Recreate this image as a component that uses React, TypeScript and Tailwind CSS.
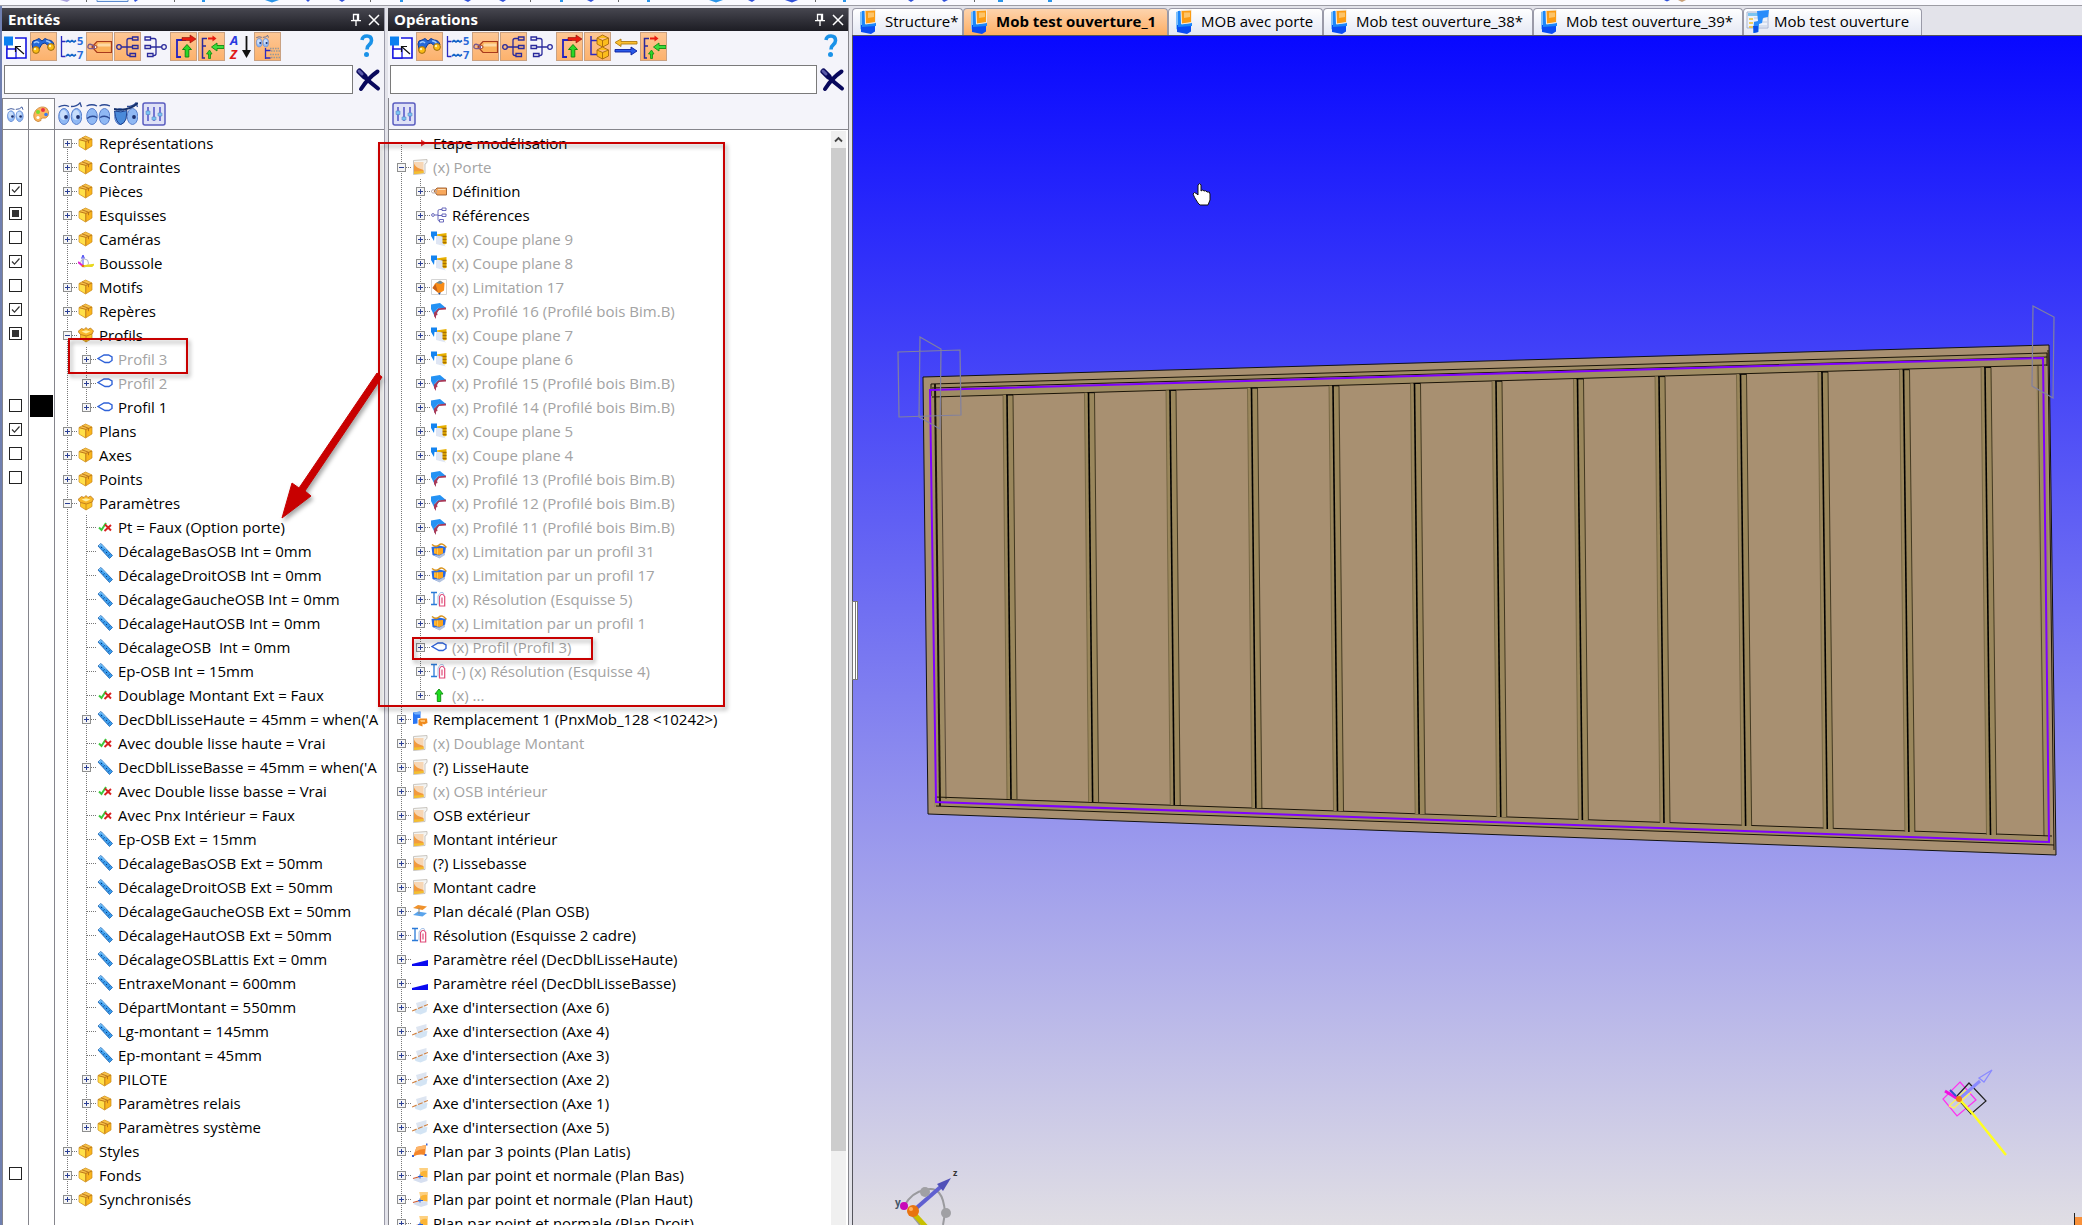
import { ReactNode } from 'react';
import clsx from 'clsx';

type IconName =
  | 'box'
  | 'openBox'
  | 'compass'
  | 'profile'
  | 'bool'
  | 'ruler'
  | 'step'
  | 'page'
  | 'tag'
  | 'refs'
  | 'cut'
  | 'limit'
  | 'beam'
  | 'limitProfile'
  | 'solve'
  | 'up'
  | 'replace'
  | 'offsetPlane'
  | 'real'
  | 'axis'
  | 'plane3'
  | 'planeNormal';

interface TreeItem {
  label: string;
  icon: IconName;
  level?: number;
  expander?: 'plus' | 'minus';
  muted?: boolean;
  check?: 'on' | 'off' | 'mixed';
  swatch?: boolean;
}

const folder = (label: string, check?: TreeItem['check'], level = 0): TreeItem => ({
  label,
  icon: 'box',
  expander: 'plus',
  check,
  level,
});
const param = (label: string, expander?: 'plus'): TreeItem => ({
  label,
  icon: 'ruler',
  level: 1,
  expander,
});
const bool = (label: string): TreeItem => ({ label, icon: 'bool', level: 1 });
const op = (label: string, icon: IconName, level = 0): TreeItem => ({
  label,
  icon,
  level,
  expander: 'plus',
  muted: /^(\(-\) )?\(x\)/.test(label),
});

const ENTITIES: TreeItem[] = [
  folder('Représentations'),
  folder('Contraintes'),
  folder('Pièces', 'on'),
  folder('Esquisses', 'mixed'),
  folder('Caméras', 'off'),
  { label: 'Boussole', icon: 'compass', check: 'on' },
  folder('Motifs', 'off'),
  folder('Repères', 'on'),
  { label: 'Profils', icon: 'openBox', expander: 'minus', check: 'mixed' },
  { label: 'Profil 3', icon: 'profile', level: 1, expander: 'plus', muted: true },
  { label: 'Profil 2', icon: 'profile', level: 1, expander: 'plus', muted: true },
  { label: 'Profil 1', icon: 'profile', level: 1, expander: 'plus', check: 'off', swatch: true },
  folder('Plans', 'on'),
  folder('Axes', 'off'),
  folder('Points', 'off'),
  { label: 'Paramètres', icon: 'openBox', expander: 'minus' },
  bool('Pt = Faux (Option porte)'),
  param('DécalageBasOSB Int = 0mm'),
  param('DécalageDroitOSB Int = 0mm'),
  param('DécalageGaucheOSB Int = 0mm'),
  param('DécalageHautOSB Int = 0mm'),
  param('DécalageOSB  Int = 0mm'),
  param('Ep-OSB Int = 15mm'),
  bool('Doublage Montant Ext = Faux'),
  param("DecDblLisseHaute = 45mm = when('A", 'plus'),
  bool('Avec double lisse haute = Vrai'),
  param("DecDblLisseBasse = 45mm = when('A", 'plus'),
  bool('Avec Double lisse basse = Vrai'),
  bool('Avec Pnx Intérieur = Faux'),
  param('Ep-OSB Ext = 15mm'),
  param('DécalageBasOSB Ext = 50mm'),
  param('DécalageDroitOSB Ext = 50mm'),
  param('DécalageGaucheOSB Ext = 50mm'),
  param('DécalageHautOSB Ext = 50mm'),
  param('DécalageOSBLattis Ext = 0mm'),
  param('EntraxeMonant = 600mm'),
  param('DépartMontant = 550mm'),
  param('Lg-montant = 145mm'),
  param('Ep-montant = 45mm'),
  folder('PILOTE', undefined, 1),
  folder('Paramètres relais', undefined, 1),
  folder('Paramètres système', undefined, 1),
  folder('Styles'),
  folder('Fonds', 'off'),
  folder('Synchronisés'),
];

const OPERATIONS: TreeItem[] = [
  { label: 'Etape modélisation', icon: 'step' },
  { label: '(x) Porte', icon: 'page', expander: 'minus', muted: true },
  op('Définition', 'tag', 1),
  op('Références', 'refs', 1),
  op('(x) Coupe plane 9', 'cut', 1),
  op('(x) Coupe plane 8', 'cut', 1),
  op('(x) Limitation 17', 'limit', 1),
  op('(x) Profilé 16 (Profilé bois Bim.B)', 'beam', 1),
  op('(x) Coupe plane 7', 'cut', 1),
  op('(x) Coupe plane 6', 'cut', 1),
  op('(x) Profilé 15 (Profilé bois Bim.B)', 'beam', 1),
  op('(x) Profilé 14 (Profilé bois Bim.B)', 'beam', 1),
  op('(x) Coupe plane 5', 'cut', 1),
  op('(x) Coupe plane 4', 'cut', 1),
  op('(x) Profilé 13 (Profilé bois Bim.B)', 'beam', 1),
  op('(x) Profilé 12 (Profilé bois Bim.B)', 'beam', 1),
  op('(x) Profilé 11 (Profilé bois Bim.B)', 'beam', 1),
  op('(x) Limitation par un profil 31', 'limitProfile', 1),
  op('(x) Limitation par un profil 17', 'limitProfile', 1),
  op('(x) Résolution (Esquisse 5)', 'solve', 1),
  op('(x) Limitation par un profil 1', 'limitProfile', 1),
  op('(x) Profil (Profil 3)', 'profile', 1),
  op('(-) (x) Résolution (Esquisse 4)', 'solve', 1),
  op('(x) ...', 'up', 1),
  op('Remplacement 1 (PnxMob_128 <10242>)', 'replace'),
  op('(x) Doublage Montant', 'page'),
  op('(?) LisseHaute', 'page'),
  op('(x) OSB intérieur', 'page'),
  op('OSB extérieur', 'page'),
  op('Montant intérieur', 'page'),
  op('(?) Lissebasse', 'page'),
  op('Montant cadre', 'page'),
  op('Plan décalé (Plan OSB)', 'offsetPlane'),
  op('Résolution (Esquisse 2 cadre)', 'solve'),
  op('Paramètre réel (DecDblLisseHaute)', 'real'),
  op('Paramètre réel (DecDblLisseBasse)', 'real'),
  op("Axe d'intersection (Axe 6)", 'axis'),
  op("Axe d'intersection (Axe 4)", 'axis'),
  op("Axe d'intersection (Axe 3)", 'axis'),
  op("Axe d'intersection (Axe 2)", 'axis'),
  op("Axe d'intersection (Axe 1)", 'axis'),
  op("Axe d'intersection (Axe 5)", 'axis'),
  op('Plan par 3 points (Plan Latis)', 'plane3'),
  op('Plan par point et normale (Plan Bas)', 'planeNormal'),
  op('Plan par point et normale (Plan Haut)', 'planeNormal'),
  op('Plan par point et normale (Plan Droit)', 'planeNormal'),
];

const TREE_ICONS: Record<IconName, ReactNode> = {
  box: (
    <>
      <path d="M1 4.500 7.500 1 14 4v7l-6.500 4L1 11z" fill="#f9b41c" stroke="#c98a1a" strokeWidth=".7" />
      <path d="M1.500 4.500 7.500 1.500 13.500 4 8 6z" fill="#f6c04a" />
      <path d="M1.500 5 7.500 6.500V14.300L1.500 11z" fill="#ffe04a" />
      <path d="M7.800 6.500V14.500M1.300 4.700 7.800 6.400 13.800 4.200M4 2.800 10.500 5.200v3" stroke="#b5701a" strokeWidth=".9" fill="none" />
    </>
  ),
  openBox: (
    <>
      <path d="M2.500 6 8 4l6 2v5.500L8 15l-5.500-3.500z" fill="#fbc52a" stroke="#c98a1a" strokeWidth=".7" />
      <path d="M0 4.500 3.500 1.500 6 2.500 8 .5l2 2 2.500-1.500 3 3-1.500 3-5.500 2-6-1.500z" fill="#f8b82a" stroke="#b9751a" strokeWidth=".8" />
      <path d="M3.500 4.500 8 3.300 12.500 4.500 8 6.500z" fill="#fff0a0" />
      <path d="M8 8.500V15" stroke="#d08e1a" />
    </>
  ),
  compass: (
    <>
      <path d="M5 11V1M3.500 3.500 5 0l1.500 3.500" stroke="#4a4af0" fill="none" />
      <circle cx="6.500" cy="8" r="4" fill="none" stroke="#b8b8c4" />
      <path d="m0 7 5 4" stroke="#e020d0" strokeWidth="2" />
      <path d="m5 11 11-1.500-2 1.800z" stroke="#e8d820" fill="#e8d820" strokeWidth="1.300" />
      <circle cx="5" cy="11" r="1.300" fill="#f07010" />
    </>
  ),
  profile: <path d="m1 7.500 6-3.500h4.500l3.500 2v3.500l-3 2H8z" fill="#fff" stroke="#2f62d8" strokeWidth="1.400" />,
  bool: (
    <>
      <path d="M2 8.500 4.500 11 9 4" stroke="#3cc83c" strokeWidth="2" fill="none" />
      <path d="m8 5.500 6 6M14 6l-6.500 6" stroke="#d82020" strokeWidth="1.900" />
    </>
  ),
  ruler: (
    <>
      <path d="M1 3 4 .5 15.500 12.500 12.500 15.500z" fill="#3a9cec" stroke="#1a62b0" strokeWidth=".8" />
      <path d="M2 3 4 1.500 9 6.500" stroke="#9ad6ff" fill="none" />
      <path d="M4 5l1-1M6.500 7.500 7.500 6.500M9 10l1-1M11.500 12.500l1-1" stroke="#0a3c80" />
    </>
  ),
  step: <path d="M1 7h8V4.500L14.500 8 9 11.500V9H1z" fill="#e03c3c" />,
  page: (
    <>
      <path d="M1.500 1.500 15 .5V3.500l-2 1.500V14.500l-11.500 1z" fill="#f4f4f2" stroke="#bdb8b0" strokeWidth=".8" />
      <path d="M2 3h9.500v11L2 15z" fill="#f7d6b4" />
      <path d="M2 4.500C4 9 8 9.500 11.500 11v3L2 15z" fill="#f29a3c" />
      <path d="M2 12.500 11.500 12v2L2 15z" fill="#f2c030" />
    </>
  ),
  tag: (
    <>
      <path d="M3 8 6 5h9.500v7H6z" fill="#f8a85c" stroke="#9a5a2a" strokeWidth=".9" />
      <path d="M7 6.500h7.500" stroke="#ffdcb0" />
      <path d="M6 8C3 6 .5 6.500.5 8.500S4 10.500 6 8.500" stroke="#b0a0a0" fill="none" />
    </>
  ),
  refs: (
    <g fill="#fff" stroke="#5a5ab4" strokeWidth=".9">
      <path d="M3.500 8H7M11 2.500H8.500Q7 2.500 7 4v8.500q0 1.500 1.500 1.500M7 8.500h4" fill="none" />
      <circle cx="2" cy="8" r="1.400" />
      <path d="M11 1h4v2.500h-4zM11 7h4v2.500h-4zM8.500 12.500h4V15h-4z" />
    </g>
  ),
  cut: (
    <>
      <path d="M5 3.500 15.500 2V13L9 14z" fill="#e8b000" />
      <path d="M10 5.500h5.500M10 8.500h5.500M11 11.500h4.500" stroke="#a87000" strokeWidth="1.300" />
      <path d="M5 4.500 11.500 5.500V12L15 15.500 5 13z" fill="#dfe6f4" />
      <path d="M0 .5h6V5L3.500 5 3 10 0 5z" fill="#1484f0" />
    </>
  ),
  limit: (
    <>
      <path d="M.5.5h15v15H.5z" fill="#fff" stroke="#d4d4d4" />
      <path d="M4 4.500 9 2 13.500 4 13 11.500 8 14.500 1.500 9z" fill="#f88c18" />
      <path d="M5 4 9 1.500l3 2-2 1.500z" fill="#6a8a9a" />
      <path d="m1.500 9 3-4L7 13.500z" fill="#c86018" />
      <path d="m7 14 1.500 1.800L10 13.500z" fill="#204a9a" />
    </>
  ),
  beam: (
    <>
      <path d="M0 1.500 9 0l6 5-3 1-3.500-.5-3 5.500L4 14 0 6z" fill="#2492f4" />
      <path d="M15 4.500V6.500L8 7 6 9.500 6.500 12 5 12.500V16L3 13V9L7 5.500z" fill="#a83a58" />
      <path d="M3 9.500 7.500 4.500" stroke="#4ab0ff" />
    </>
  ),
  limitProfile: (
    <>
      <path d="M.5 4 8 2.500 15 4 14 10 8.500 15 1.500 12z" fill="#2a6ae0" />
      <path d="M3 5.500 12 5V10.500L8.500 12 3 10.500z" fill="#fca41c" />
      <path d="M4 5.500V10M6.500 5.500V11.500" stroke="#ffc850" />
      <path d="M2.500 12 8.500 12.500 14 9.500V12L8.500 15.500z" fill="#b4c4e0" />
      <path d="M1 1.500Q5 5 8 2t7.500 2.500" stroke="#d8921a" strokeWidth="1.500" fill="none" />
    </>
  ),
  solve: (
    <>
      <path d="M0 1.500h6M0 13.500h6M3 1.500v12" stroke="#2a7ad8" strokeWidth="1.300" />
      <path d="M7 13.500V5L9.500 1.500H12L13 4" fill="none" stroke="#a8c4e8" />
      <path d="M8.500 15V5.500Q11 1 13.700 5.500V15zM11 6.500v6" fill="#fff" stroke="#e04a78" strokeWidth="1.200" />
    </>
  ),
  up: <path d="M8 2 12 7H9.700v7.500H6.300V7H4z" fill="#1ede1e" stroke="#149414" />,
  replace: (
    <>
      <path d="M1 1.500 8.500.5V7L5.500 7v5.500L1 13z" fill="#2a76f4" />
      <path d="M1 1.500 8.500.5V3.500H3z" fill="#7ab4ff" />
      <path d="M6.500 9 8 7.500H15L15.500 12 12 13.500 10.500 12.500V15.500L6.500 14z" fill="#f08a1c" />
      <path d="M8 9h5v2H9z" fill="#fcc070" />
    </>
  ),
  offsetPlane: (
    <>
      <path d="m1 5 5-3 9 1.500-4.500 3.500z" fill="#f0922c" />
      <path d="m1 12 5-3.500 9 1.500-4.500 3.500z" fill="#5aa4ec" />
      <path d="M7 5v6" stroke="#888" />
    </>
  ),
  real: <path d="M0 13 16 9V15H0z" fill="#0a0af0" />,
  axis: (
    <>
      <path d="m4 4 10.500-3v6.500l-9 2z" fill="#dde5f1" />
      <path d="m2.500 11.500 6-3 7-.5-1 5-6 2.500-5-1.500z" fill="#d3e4f4" />
      <path d="M0 12 16 5.500" stroke="#d08040" strokeWidth="1.100" strokeDasharray="5 1.500" />
    </>
  ),
  plane3: (
    <>
      <path d="m4.500 4 9.500-2L13 12q-6-1.500-12 1.500z" fill="#f4862a" />
      <path d="m4.500 4 9.500-2-.5 4Q8 5.500 3 9z" fill="#fdb468" />
      <path d="M14 .5h1.500v2H14zM0 12h2v2H0zM12.500 11h2v2h-2z" fill="#3a62d0" />
    </>
  ),
  planeNormal: (
    <>
      <path d="m1 13 5-3 9.500.5V14L9 16z" fill="#d6dff0" />
      <path d="M7.500 1h8v9.500l-7-1z" fill="#fbb436" />
      <path d="M8 1h7.500V4Q11 3 8 6z" fill="#fdd080" />
      <path d="m1 11.500 7-2" stroke="#d05a30" strokeWidth="1.300" />
      <path d="M8 7.500v4M6 9.500h5" stroke="#2a62d8" />
    </>
  ),
};

const Connector = ({ item, top, bottom }: { item: TreeItem; top: boolean; bottom: boolean }) => (
  <svg width="15" height="24" className="shrink-0" aria-hidden>
    <g stroke="#777" strokeDasharray="1 1" shapeRendering="crispEdges">
      {top && <path d="M4.500 0V12" />}
      {bottom && <path d="M4.500 12V24" />}
      {item.icon !== 'step' && <path d="M5 12.500H15" />}
    </g>
    {item.expander && (
      <>
        <rect x=".5" y="8.500" width="8" height="8" fill="#f6f6f6" stroke="#8e8f8f" />
        <path d="M2 12.500H7" stroke="#2b3f94" />
        {item.expander === 'plus' && <path d="M4.500 10V15" stroke="#2b3f94" />}
      </>
    )}
  </svg>
);

const Tree = ({ items, label }: { items: TreeItem[]; label: string }) => (
  <ul aria-label={label} className="min-w-0 flex-1 overflow-hidden pl-2 pt-px">
    {items.map((item, i) => {
      const level = item.level ?? 0;
      const rest = items.slice(i + 1);
      const stop = rest.findIndex((next) => (next.level ?? 0) < level);
      const siblings = stop < 0 ? rest : rest.slice(0, stop);
      return (
        <li key={i} className="flex h-6 items-center">
          {level > 0 && (
            <svg width="19" height="24" className="shrink-0" aria-hidden>
              <path d="M4.500 0V24" stroke="#777" strokeDasharray="1 1" shapeRendering="crispEdges" />
            </svg>
          )}
          <Connector
            item={item}
            top={i > 0}
            bottom={siblings.some((next) => (next.level ?? 0) === level)}
          />
          <svg width="16" height="16" className="shrink-0" aria-hidden>
            {TREE_ICONS[item.icon]}
          </svg>
          <span className={clsx('ml-[5px] whitespace-pre', item.muted && 'text-[#a3a3a3]')}>
            {item.label}
          </span>
        </li>
      );
    })}
  </ul>
);

const Eyes = ({ mode = 'open' }: { mode?: 'open' | 'closed' | 'patch' }) => (
  <>
    <g stroke="#5a80cc">
      <ellipse cx="6" cy="14.500" rx="5.300" ry="8" fill="#8fb8f4" />
      <ellipse cx="18.500" cy="14.500" rx="5.300" ry="8" fill="#8fb8f4" />
    </g>
    {mode === 'open' && (
      <g fill="#c8defc">
        <ellipse cx="5.500" cy="13" rx="3.500" ry="5" />
        <ellipse cx="18" cy="13" rx="3.500" ry="5" />
      </g>
    )}
    {mode !== 'closed' && (
      <>
        <circle cx="20" cy="15" r="1.900" fill="#1c2f6c" />
        <path d="M13 4.500Q19 4.500 22 .8L23.500 5" stroke="#2c4a94" strokeWidth="1.300" fill="none" />
      </>
    )}
    {mode === 'open' && (
      <>
        <circle cx="8" cy="15" r="1.900" fill="#1c2f6c" />
        <path d="M.5 5Q6 2 11 4.500" stroke="#2c4a94" strokeWidth="1.300" fill="none" />
      </>
    )}
    {mode === 'closed' && (
      <path d="M.5 4Q6 1.500 11 4M13.500 4Q18 1.500 24 4M1 16.500Q6 12.500 11 15.500M14 15.500Q19 12.500 24 16.500" stroke="#2c4a94" strokeWidth="1.300" fill="none" />
    )}
    {mode === 'patch' && (
      <>
        <path d="M.5 9Q7 11 13 8.500L12 17Q10 22 6.500 22.500 2 21 .5 9z" fill="#4a8ada" stroke="#1c3f8c" />
        <path d="M0 7Q14 10 24 1" stroke="#14306c" strokeWidth="1.800" fill="none" />
      </>
    )}
  </>
);

const Sliders = () => (
  <>
    <rect x="1" y="1" width="22" height="22" rx="2" fill="#dfe1f6" stroke="#5a5cc0" strokeWidth="1.500" />
    <path d="M6 5v14M12 5v14M18 5v14" stroke="#3a3cc0" strokeWidth="1.300" />
    <path d="M4 9h4v3.500H4zM10 15h4v3h-4zM16 11h4v3h-4z" fill="#7cc4f4" stroke="#5a8ac8" strokeWidth=".6" />
  </>
);

const TreeNodes = () => (
  <g fill="none" stroke="#2a2a9c" strokeWidth="1.300">
    <circle cx="5" cy="15" r="2.300" />
    <path d="M7.300 15H18M13 15V8.500q0-2 2-2h3M13 15v6.500q0 2 2 2h1" />
    <path d="M18.500 5h5.500v3h-5.500zM18.500 13.500h5.500v3h-5.500zM16 21.500h5.500v3H16z" />
  </g>
);

const BAR_ICONS: Record<string, { title: string; active?: boolean; art: ReactNode }> = {
  window: {
    title: 'Sélection',
    art: (
      <>
        <path d="M5 8.500V26h19V6H13" fill="#fff" stroke="#1414e0" strokeWidth="1.600" />
        <path d="M5 17H14V26H5z" fill="#fff" stroke="#1414e0" strokeWidth="1.300" />
        <path d="M2 4.500h9v9H2z" fill="#0a80f0" />
        <path d="M22 22l-8-7M13.500 20V14.500H19" stroke="#111" strokeWidth="1.200" fill="none" />
      </>
    ),
  },
  search: {
    title: 'Rechercher',
    active: true,
    art: (
      <>
        <path d="M2 12Q2 8 6 8L9 6.500 12 9 15 6.500 18 8Q23 8 24 13L20 15 15 11 12 12 9 17 3 17z" fill="#2468d8" stroke="#123c94" />
        <path d="M4 11q3-2.500 5 0M16 9q3-.5 5 3" stroke="#9ccaff" strokeWidth="1.500" fill="none" />
        <circle cx="6" cy="18" r="3.400" fill="#fbbc14" stroke="#9a6a10" />
        <circle cx="21" cy="15" r="3.400" fill="#fbbc14" stroke="#9a6a10" />
        <circle cx="5" cy="17" r="1.200" fill="#fff4b0" />
        <circle cx="20" cy="14" r="1.200" fill="#fff4b0" />
      </>
    ),
  },
  numbering: {
    title: 'Numérotation',
    art: (
      <>
        <path d="M3.500 4v21M3.500 9.500h4M3.500 24.500h4" stroke="#2a2ac0" strokeWidth="1.300" fill="none" />
        <path d="M8 10l2-1.500L12 10l2-1.500 2 1.500 2-1.500M8 24l2-1.500L12 24l2-1.500 2 1.500 2-1.500" stroke="#1464c8" strokeWidth="1.600" fill="none" />
        <text x="19" y="13" fontSize="11" fontWeight="700" fill="#2a6ad8">5</text>
        <text x="19" y="27" fontSize="11" fontWeight="700" fill="#2a6ad8">7</text>
      </>
    ),
  },
  label: {
    title: 'Définition',
    active: true,
    art: (
      <>
        <path d="M6 15 11 9.500H25.500V20.500H11z" fill="#fbb05a" stroke="#a83a1c" strokeWidth="1.200" />
        <path d="M12 11.500h12.500v3H11z" fill="#fdd8a4" />
        <circle cx="9.500" cy="15" r="1.500" fill="#fff" stroke="#a83a1c" />
        <path d="M9 15Q3 10 2 14t7 2" stroke="#7a5a8c" strokeWidth="1.300" fill="none" />
      </>
    ),
  },
  nodes: { title: 'Références', active: true, art: <TreeNodes /> },
  nodesBack: {
    title: 'Dépendances',
    art: (
      <g transform="matrix(-1 0 0 1 27 0)">
        <TreeNodes />
      </g>
    ),
  },
  insert: {
    title: 'Insérer',
    active: true,
    art: (
      <>
        <path d="M16 8H7V25H11" stroke="#2222c0" strokeWidth="1.800" fill="none" />
        <path d="M12 5.500h8V3l6 4-6 4V8.500h-8z" fill="#e81c10" stroke="#8c1208" strokeWidth=".6" />
        <path d="M17 12.500l4.500 5h-2.700V25h-3.600v-7.500h-2.700z" fill="#28d828" stroke="#118a11" />
      </>
    ),
  },
  move: {
    title: 'Déplacer',
    active: true,
    art: (
      <>
        <path d="M9 6.500H4.500V26H7M4.500 14H8" stroke="#2a2a9c" strokeWidth="1.500" fill="none" />
        <path d="M10 5.500h4.500V3.500l4 3-4 3V7.500H10z" fill="#e81c10" />
        <path d="M26 13.500v3h-7V19l-5.500-4L19 11v2.500z" fill="#3cdc3c" stroke="#128a12" strokeWidth=".9" />
        <path d="M11.500 18 14 22H12.500v4.500h-2V22H8.500z" fill="#28d828" stroke="#118a11" strokeWidth=".8" />
      </>
    ),
  },
  sort: {
    title: 'Trier',
    art: (
      <>
        <text x="4" y="13" fontSize="13" fontStyle="italic" fontWeight="700" fill="#2a3ae0">A</text>
        <text x="4" y="27" fontSize="13" fontStyle="italic" fontWeight="700" fill="#e01818">Z</text>
        <path d="M20.500 4v16" stroke="#111" strokeWidth="1.800" />
        <path d="M16 18h9l-4.500 8z" fill="#111" />
      </>
    ),
  },
  visible: {
    title: 'Visibilité',
    active: true,
    art: (
      <>
        <g transform="translate(2 3) scale(.53)">
          <Eyes />
        </g>
        <path d="M11.500 16v11M11.500 18.500h5M11.500 26h5" stroke="#2a2ac0" strokeWidth="1.300" />
        <path d="M16 16.500h10M17 19h9M16 22.500h10M17 25.500h9" stroke="#999" strokeWidth="1.500" strokeDasharray="1.500 1" />
      </>
    ),
  },
  cubes: {
    title: 'Composants',
    active: true,
    art: (
      <>
        <path d="M7 4v18.500h6M7 8.500h6" stroke="#2a2ac0" strokeWidth="1.500" fill="none" />
        <g fill="#fcbc1c" stroke="#a86a0c" strokeWidth=".9">
          <path d="m13 6 5.500-3L24.500 6v6l-6 3L13 12zM13 6l5.500 2.500L24.500 6M18.500 8.500V15" />
          <path d="m13 18 5.500-3 6 3v6l-6 3-5.500-3zM13 18l5.500 2.500 6-2.500M18.500 20.500V27" />
        </g>
      </>
    ),
  },
  swap: {
    title: 'Inverser',
    art: (
      <>
        <path d="M25 9.500V12H9v2.500L3 10.500 9 7V9.500z" fill="#fbc030" stroke="#b07a10" strokeWidth=".9" />
        <path d="M3 17.500V20h16V23l6-4-6-4V17.500z" fill="#2a5ae8" stroke="#0a1e9c" strokeWidth=".9" />
      </>
    ),
  },
};

const ENTITY_BAR = ['window', 'search', 'numbering', 'label', 'nodes', 'nodesBack', 'insert', 'move', 'sort', 'visible'];
const OPERATION_BAR = ['window', 'search', 'numbering', 'label', 'nodes', 'nodesBack', 'insert', 'cubes', 'swap', 'move'];

const PanelHead = ({ title, tools, id }: { title: string; tools: string[]; id: string }) => (
  <>
    <header className="flex h-[23px] items-center bg-linear-to-b from-[#474750] to-[#1d1d24] pl-1.5 pr-1 text-white">
      <h2 className="flex-1 pb-0.5 font-bold">{title}</h2>
      <button aria-label="Épingler" className="mr-1.5">
        <svg width="12" height="16" stroke="#fff" fill="none" strokeWidth="1.300">
          <path d="M3.500 2.500h5v6h-5zM1 8.700h10M6 9v5M7.500 2.500v6" />
        </svg>
      </button>
      <button aria-label="Fermer">
        <svg width="12" height="12" stroke="#fff" strokeWidth="1.500">
          <path d="m1 1 10 10M11 1 1 11" />
        </svg>
      </button>
    </header>
    <div className="flex h-[34px] items-start gap-px pt-px">
      {tools.map((name) => (
        <button
          key={name}
          title={BAR_ICONS[name].title}
          className={clsx(
            'h-[29px] w-[27px]',
            BAR_ICONS[name].active &&
              'bg-linear-to-b from-[#fdc795] to-[#fcb16b] outline outline-[#c9a182] -outline-offset-1'
          )}
        >
          <svg width="27" height="29" aria-hidden>
            {BAR_ICONS[name].art}
          </svg>
        </button>
      ))}
      <button aria-label="Aide" className="ml-auto mr-2.5 mt-0.5">
        <svg width="14" height="24">
          <path d="M2 6Q2.500 2 7 2t4.500 4.500Q11.500 9 9 11 7 12.500 7 15.500" stroke="#1a92e8" strokeWidth="3.600" fill="none" />
          <circle cx="6.500" cy="20.500" r="2.500" fill="#1a92e8" />
        </svg>
      </button>
    </div>
    <div className="flex h-[33px] items-start pl-0.5">
      <input
        id={id}
        aria-label={`Filtrer ${title}`}
        className="h-[29px] min-w-0 flex-1 border border-[#7a7a7a] bg-white px-1 outline-none"
      />
      <button aria-label="Effacer le filtre" className="ml-0.5 mr-[3px] mt-0.5">
        <svg width="26" height="26" strokeLinecap="round">
          <path d="M22.500 4.500Q13 11 6 22" stroke="#08085c" strokeWidth="4" fill="none" />
          <path d="M4.500 4.500 15 15 23 21.500" stroke="#08085c" strokeWidth="4" fill="none" />
          <path d="M4.500 4.500l5 5" stroke="#08085c" strokeWidth="6" />
          <path d="M4 4l3 3" stroke="#5a5aa8" strokeWidth="3" />
        </svg>
      </button>
    </div>
  </>
);

const CheckCell = ({ item }: { item: TreeItem }) => (
  <div className="flex h-6 justify-center pt-[5px]">
    {item.check && (
      <label className="relative h-[13px] w-[13px]">
        <input
          type="checkbox"
          aria-label={item.label}
          defaultChecked={item.check === 'on'}
          className="block h-[13px] w-[13px] appearance-none border border-[#222] bg-white"
        />
        <svg width="13" height="13" className="absolute inset-0" aria-hidden>
          {item.check === 'on' && (
            <path d="m3 6.500 2.500 2.700L10.500 3.500" stroke="#333" strokeWidth="1.200" fill="none" />
          )}
          {item.check === 'mixed' && <path d="M3 3h7v7H3z" fill="#333" />}
        </svg>
      </label>
    )}
  </div>
);

const EntitiesPanel = () => (
  <section className="flex w-[383px] shrink-0 flex-col border-r border-[#9a9aa8] bg-[#f4f4fa]">
    <PanelHead title="Entités" tools={ENTITY_BAR} id="filter-entities" />
    <div className="flex min-h-0 flex-1">
      <div className="flex w-[27px] flex-col border-x border-t border-[#85858c] bg-white">
        <div className="flex h-[31px] items-center justify-center border-b border-[#85858c]">
          <svg width="17" height="17" viewBox="0 0 25 24">
            <Eyes />
          </svg>
        </div>
        {ENTITIES.map((item) => (
          <CheckCell key={item.label} item={item} />
        ))}
      </div>
      <div className="flex w-[26px] flex-col border-r border-t border-[#85858c] bg-white">
        <div className="flex h-[31px] items-center justify-center border-b border-[#85858c]">
          <svg width="17" height="17">
            <path d="M3 4Q8-1 13.500 2 17 5 15 10q-2 3-5 2-3 0-2 2.500Q5 17 2 14-1 9 3 4z" fill="#fbb65c" stroke="#c07a2c" strokeWidth=".7" />
            <circle cx="5" cy="6" r="2" fill="#7cdc2c" />
            <circle cx="10" cy="4" r="2" fill="#e83048" />
            <circle cx="13" cy="8.500" r="1.800" fill="#3a7af0" />
            <circle cx="5" cy="11.500" r="1.600" fill="#fff" />
          </svg>
        </div>
        {ENTITIES.map((item) => (
          <div key={item.label} className="flex h-6 items-center justify-center">
            {item.swatch && <span className="h-[22px] w-[23px] bg-black" />}
          </div>
        ))}
      </div>
      <div className="flex min-w-0 flex-1 flex-col">
        <div className="flex h-8 items-center gap-1 border-b border-[#85858c] pl-[3px]">
          <button aria-label="Tout afficher">
            <svg width="24" height="24"><Eyes /></svg>
          </button>
          <button aria-label="Tout masquer">
            <svg width="24" height="24"><Eyes mode="closed" /></svg>
          </button>
          <button aria-label="Affichage partiel">
            <svg width="24" height="24"><Eyes mode="patch" /></svg>
          </button>
          <button aria-label="Options des entités">
            <svg width="24" height="24"><Sliders /></svg>
          </button>
        </div>
        <div className="flex min-h-0 flex-1 bg-white">
          <Tree items={ENTITIES} label="Entités" />
        </div>
      </div>
    </div>
  </section>
);

const OperationsPanel = () => (
  <section className="ml-[3px] flex w-[461px] shrink-0 flex-col border-r border-[#85858c] bg-[#f4f4fa]">
    <PanelHead title="Opérations" tools={OPERATION_BAR} id="filter-operations" />
    <div className="flex h-8 items-center border-b border-l border-[#85858c] pl-[3px]">
      <button aria-label="Options des opérations">
        <svg width="24" height="24"><Sliders /></svg>
      </button>
    </div>
    <div className="flex min-h-0 flex-1 border-l border-[#85858c] bg-white pr-0.5">
      <Tree items={OPERATIONS} label="Opérations" />
      <div className="mt-px flex w-[15px] flex-col bg-[#f0f0f0]">
        <button aria-label="Défiler vers le haut" className="flex h-[17px] items-center justify-center">
          <svg width="9" height="7">
            <path d="M1 5.500 4.500 2 8 5.500" stroke="#444" strokeWidth="1.800" fill="none" />
          </svg>
        </button>
        <div className="h-11/12 bg-[#cdcdcd]" />
      </div>
    </div>
  </section>
);

const PartIcon = () => (
  <svg width="18" height="26" className="shrink-0" aria-hidden>
    <path d="M1 3 5 1.500V22L1 20z" fill="#7cc0fc" />
    <path d="M2 16h14v6.500L12 25 2 23z" fill="#0a4cf4" />
    <path d="M3 2h3v13l11-1v3L3 18z" fill="#1c86fa" />
    <path d="M6 1.500 16.500 1v12.500L6.500 15z" fill="#fb9c14" stroke="#f4ece0" />
    <path d="M9 3.500h6V8L9 9z" fill="#fdc468" />
  </svg>
);

const DraftIcon = () => (
  <svg width="24" height="26" className="shrink-0" aria-hidden>
    <path d="M1 3h21v16H1z" fill="#eef2fb" stroke="#a8b4d0" />
    <path d="M2 4h14v3H2z" fill="#7cc4f0" />
    <path d="M3 10h4M3 14h4M3 18h4" stroke="#f0c030" strokeWidth="1.500" />
    <path d="M8 9h10M8 13h13M8 17h13" stroke="#c0cce0" />
    <path d="M11 2 23 1 22 8 17 9 16 14 13 15 12.500 23 7 24 8 13 12 12z" fill="#2a8cfa" />
    <path d="M7 17h5v6l-4 1z" fill="#0c50e8" />
  </svg>
);

const TABS = [
  { label: 'Structure*', className: 'w-[111px]' },
  { label: 'Mob test ouverture_1', active: true, className: 'w-[205px]' },
  { label: 'MOB avec porte', className: 'w-[155px]' },
  { label: 'Mob test ouverture_38*', className: 'w-[210px]' },
  { label: 'Mob test ouverture_39*', className: 'w-[210px]' },
  { label: 'Mob test ouverture', draft: true, className: 'w-[179px]' },
];

const STUDS = Array.from({ length: 13 }, (_, i) => i);

const Scene = () => (
  <svg
    className="block h-full w-full"
    viewBox="853 36 1229 1189"
    preserveAspectRatio="xMinYMin slice"
    role="img"
    aria-label="Vue 3D du panneau"
  >
    <path d="M923 377 2049 345 2056 855 928 814z" fill="#a89071" stroke="#111" />
    <path d="M931 384 2047 353v12L932 397z" fill="#9f8c64" />
    <path d="M934 797 2052 837v8L934 807z" fill="#9f8c64" />
    <path d="M931 390h9l5 408h-9zM2036 366h10l5 474h-8z" fill="#9f8c64" />
    <g stroke="#1a1408" fill="none">
      <path d="M931 384 2047 353M932 388 2047 357M932 397 2047 365M931 384v12M2047 353v13" />
      <path d="M936 797 2052 836M936 806 2054 845" />
      <path d="M935 384 940 806" strokeWidth="2" />
      <path d="M941 397l5 402M2038 366l6 470" strokeOpacity=".6" />
      <path d="M2048 350l6 500" />
    </g>
    {STUDS.map((i) => {
      const x = 1007 + i * 81.5;
      const foot = x + 4 + i / 8;
      const top = 395 - i * 2.3;
      const base = 799 + i * 3;
      return (
        <g key={i}>
          <path d={`M${x - 4} ${top}H${x + 6}L${foot + 6} ${base}H${foot - 4}z`} fill="#9a875c" />
          <path d={`M${x - 4} ${top}L${foot - 4} ${base}`} stroke="#5c5030" strokeOpacity=".6" />
          <path d={`M${x + 6} ${top}L${foot + 6} ${base}`} stroke="#2c2410" strokeOpacity=".8" />
          <path d={`M${x} ${top}L${foot} ${base}`} stroke="#000" strokeWidth="1.600" />
          <path d={`M${x - 1} ${top}h7`} stroke="#000" />
        </g>
      );
    })}
    <path d="M930 390 2043 358 2049 842 936 802z" fill="none" stroke="#7f00ff" strokeWidth="2" />
    <g fill="none" stroke="#8080a0" strokeWidth="1.200">
      <path d="M898 352 960 350 961 415 899 417zM920 337 941 349 940 429 919 417z" />
      <path d="M2033 306 2054 317 2053 398 2032 386z" />
    </g>

    {/* part coordinate system */}
    <g fill="none">
      <path d="M1960 1082 1976 1100 1957 1116 1943 1099z" stroke="#ff30f0" strokeWidth="1.200" />
      <path d="M1969 1083 1986 1101 1971 1114 1956 1097z" stroke="#222" strokeWidth="1.200" />
      <path d="M1949 1106 1966 1090M1949 1106l5 2 17-16" stroke="#f8f060" strokeWidth="1.500" />
      <path d="M1959 1099 1980 1081" stroke="#8a8aff" strokeWidth="3" />
      <path d="M1992 1070 1979 1078 1984 1082z" stroke="#8a8aff" strokeWidth="1.300" />
      <path d="M1945 1091 1958 1099" stroke="#f010e0" strokeWidth="3" />
      <path d="M1950 1090 1956 1096" stroke="#3050d0" strokeWidth="2" />
      <path d="M1960 1100 1973 1114 2006 1155" stroke="#ffff20" strokeWidth="2.500" />
      <circle cx="1959" cy="1099" r="3" fill="#f47c10" />
    </g>

    {/* view compass */}
    <g fill="none">
      <path d="M904 1206Q912 1192 925 1190 943 1184 945 1213L943 1225M912 1215Q918 1222 920 1225" stroke="#9a9a9e" strokeWidth="2" />
      <path d="M913 1211 944 1184" stroke="#6060d0" strokeWidth="4" />
      <path d="M951 1178 937 1184 943 1191z" fill="#5050b8" />
      <path d="M915 1215 926 1227" stroke="#c8c000" strokeWidth="5" />
      <circle cx="904" cy="1206" r="4" fill="#c808b8" />
      <circle cx="925" cy="1192" r="5" fill="#a0a0a4" />
      <circle cx="946" cy="1213" r="5" fill="#a0a0a4" />
      <circle cx="913" cy="1211" r="6" fill="#e87410" />
      <circle cx="911" cy="1209" r="2" fill="#ffb060" />
      <text x="953" y="1176" fontSize="9" fontWeight="700" fill="#333">z</text>
      <text x="895" y="1206" fontSize="10" fontWeight="700" fill="#456">y</text>
    </g>
    <path d="M2074.500 1213v12" stroke="#222" />
    <path d="M2075 1217h7v8h-7z" fill="#f9913a" />

    {/* hand cursor */}
    <path
      d="M1198 203q-4-6-5-9 1-3 4 0l1 1v-10q2-3 3 0v6q2-2 3 0 2-1 3 1 3-1 3 2v6l-2 5h-8z"
      fill="#fff"
      stroke="#111"
    />
  </svg>
);

const Workspace = () => (
  <main className="ml-[3px] flex min-w-0 flex-1 flex-col">
    <nav aria-label="Documents" className="flex h-7 items-end border-b border-[#55555c]">
      {TABS.map((tab) => (
        <button
          key={tab.label}
          className={clsx(
            'flex h-[27px] items-center overflow-hidden whitespace-nowrap rounded-t-[4px] border border-b-0 border-[#9a9aa8]',
            tab.className,
            tab.draft ? 'gap-1 pl-0.5' : 'gap-2 pl-1.5',
            tab.active
              ? 'bg-linear-to-b from-[#fdd3ac] to-[#fdae62] font-bold'
              : 'bg-linear-to-b from-white to-[#e4e8f4]'
          )}
        >
          {tab.draft ? <DraftIcon /> : <PartIcon />}
          <span className="pb-0.5">{tab.label}</span>
        </button>
      ))}
    </nav>
    <div className="relative min-h-0 flex-1 border-l border-[#55555c] bg-linear-to-b/srgb from-[#0808ff] to-[#e0dee4]">
      <Scene />
      <button
        aria-label="Replier les panneaux"
        className="absolute -left-px top-[565px] flex h-[79px] w-[6px] justify-center border border-[#777] bg-white"
      >
        <span className="h-full w-px bg-[#777]" />
      </button>
    </div>
  </main>
);

const Annotations = () => (
  <svg className="pointer-events-none absolute left-0 top-0 drop-shadow-[2px_3px_2px_rgba(0,0,0,0.35)]" width="740" height="720" aria-hidden>
    <g fill="none" stroke="#c80000" strokeWidth="2">
      <path d="M379 143H724V706H379zM69 339H187V373H69zM413 638H592V659H413z" />
    </g>
    <path d="m377 373 5 4-77 114 6 5-29 22 10-35 7 5z" fill="#c80000" stroke="#c80000" />
  </svg>
);

/* bottom edge of the ribbon, only the feet of its icons show */
const RibbonEdge = () => (
  <div className="h-1.5 shrink-0 overflow-hidden border-b border-[#9c9ca4] bg-[#fafaff]">
    <svg width="2082" height="5" className="block" aria-hidden>
      <path d="M97 0v1.500h31V0" fill="#e4f0fc" stroke="#5a8ad0" />
      <path d="M86.500 0v2M174.500 0v2M370.500 0v2M530.500 0v2M618.500 0v2M815.500 0v2M974.500 0v2" stroke="#666" />
      <g fill="#2f4fd8">
        <path d="M134 0h4l-3 2zM306 0h4l-2 2zM339 0h6l-3 2zM464 0h7l-3 2zM499 0h7l-3 2zM587 0h7l-3 2zM748 0h7l-3 2zM908 0h6l-3 2zM942 0h6l-4 2z" />
        <path d="M785 0h13l-6 2.500zM1664 0h6l-3 1.500z" />
      </g>
      <g fill="#2a94e8">
        <path d="M202 0h3v2h-3zM265 0h14l-7 2.500zM400 0h3v2h-3zM560 0h3v2h-3zM647 0h3v2h-3zM709 0h14l-7 2.500zM843 0h3v2h-3zM998 0h5v2h-5zM1048 0h4v2h-4z" />
      </g>
      <path d="M60 0h10l-3 2z" fill="#a8a0dc" />
      <path d="M1678 0h8l-4 2z" fill="#c8a078" />
    </svg>
  </div>
);

export default function App() {
  return (
    <div className="relative flex h-screen flex-col overflow-hidden bg-[#e3e3ea] font-['Open_Sans','Noto_Sans',sans-serif] text-[15px] leading-5 text-black">
      <RibbonEdge />
      <div className="flex min-h-0 flex-1 border-l-2 border-[#6f7fb0] pt-0.5">
        <EntitiesPanel />
        <OperationsPanel />
        <Workspace />
      </div>
      <Annotations />
    </div>
  );
}
